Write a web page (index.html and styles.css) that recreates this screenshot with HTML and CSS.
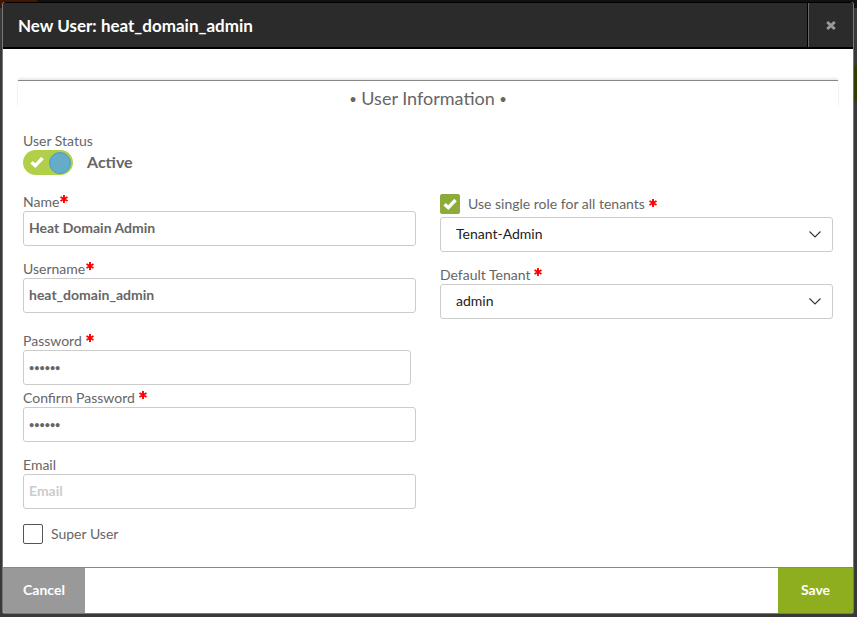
FILE: index.html
```html
<!DOCTYPE html>
<html lang="en">
<head>
<meta charset="utf-8">
<title>New User</title>
<link rel="stylesheet" href="styles.css">
</head>
<body>
<svg class="defs" aria-hidden="true">
  <symbol id="star" viewBox="0 0 8 8"><path d="M4 0v8M.5 2l7 4M7.5 2l-7 4" stroke="#f00" stroke-width="1.9"/></symbol>
  <symbol id="chevron" viewBox="0 0 12 7"><path d="M.5.5 6 6 11.500.5" fill="none" stroke="#333" stroke-width="1.1"/></symbol>
  <symbol id="check" viewBox="0 0 14 12"><path d="M1.500 6.200 5.300 9.600 12.500 2" fill="none" stroke="#fff" stroke-width="3.400"/></symbol>
</svg>
<div class="backdrop-accent backdrop-brand"></div>
<div class="backdrop-accent backdrop-action"></div>
<form class="dialog" role="dialog" aria-labelledby="title">
  <header class="dialog-header">
    <h1 class="dialog-title" id="title">New User: heat_domain_admin</h1>
    <button class="close" type="button" aria-label="Close">
      <svg width="10" height="9" viewBox="0 0 10 9"><path d="M1.200 1 8.800 8M8.800 1 1.200 8" stroke="#98989d" stroke-width="2.900"/></svg>
    </button>
  </header>
  <main class="dialog-body">
    <h2 class="section-title"><span class="bullet">•</span> User Information <span class="bullet">•</span></h2>
    <div class="columns">
      <div class="column">
        <div class="status">
          <label class="label" for="status">User Status</label>
          <div class="status-row">
            <span class="toggle">
              <input class="toggle-input" type="checkbox" id="status" checked>
              <svg class="toggle-check" width="14" height="12"><use href="#check"/></svg>
            </span>
            <span class="status-value">Active</span>
          </div>
        </div>
        <div class="field">
          <label class="label" for="name">Name<svg class="star star-tight"><use href="#star"/></svg></label>
          <input class="control" id="name" type="text" value="Heat Domain Admin">
        </div>
        <div class="field field-spaced">
          <label class="label" for="username">Username<svg class="star star-tight"><use href="#star"/></svg></label>
          <input class="control" id="username" type="text" value="heat_domain_admin">
        </div>
        <div class="field field-close field-password">
          <label class="label" for="password">Password<svg class="star"><use href="#star"/></svg></label>
          <input class="control control-secret" id="password" type="password" value="secret">
        </div>
        <div class="field">
          <label class="label" for="confirm">Confirm Password<svg class="star"><use href="#star"/></svg></label>
          <input class="control control-secret" id="confirm" type="password" value="secret">
        </div>
        <div class="field">
          <label class="label" for="email">Email</label>
          <input class="control" id="email" type="email" placeholder="Email">
        </div>
        <div class="check-row">
          <span class="checkbox"><input class="checkbox-input" type="checkbox" id="super"></span>
          <label class="check-label" for="super">Super User</label>
        </div>
      </div>
      <div class="column column-roles">
        <div class="field">
          <div class="check-row check-row-top">
            <span class="checkbox"><input class="checkbox-input" type="checkbox" id="single" checked><svg class="checkbox-mark" width="14" height="12"><use href="#check"/></svg></span>
            <label class="check-label" for="single">Use single role for all tenants<svg class="star star-inline"><use href="#star"/></svg></label>
          </div>
          <div class="select-wrap">
            <select class="control select" aria-label="Role"><option>Tenant-Admin</option></select>
            <svg class="chevron" width="12" height="7"><use href="#chevron"/></svg>
          </div>
        </div>
        <div class="field">
          <label class="label" for="tenant">Default Tenant<svg class="star"><use href="#star"/></svg></label>
          <div class="select-wrap">
            <select class="control select" id="tenant"><option>admin</option></select>
            <svg class="chevron" width="12" height="7"><use href="#chevron"/></svg>
          </div>
        </div>
      </div>
    </div>
  </main>
  <footer class="dialog-footer">
    <button class="button button-cancel" type="button">Cancel</button>
    <button class="button button-save" type="submit">Save</button>
  </footer>
</form>
</body>
</html>
```
FILE: styles.css
```css
*, *::before, *::after { box-sizing: border-box; }

body {
  margin: 0;
  padding: 2px 3px 3px 2px;
  min-height: 100vh;
  display: flex;
  background: linear-gradient(#111 8px, #39393a 8px);
  color: #666;
  font: 14px/17px Lato, "Liberation Sans", sans-serif;
}

.defs { position: absolute; width: 0; height: 0; }

.backdrop-accent { position: absolute; z-index: -1; }
.backdrop-brand { top: 0; left: 0; width: 37px; height: 8px; background: #421603; }
.backdrop-action { top: 66px; right: 0; width: 8px; height: 35px; background: #2f3d00; }

.dialog {
  flex: 1;
  display: flex;
  flex-direction: column;
  background: #fff;
  border: 1px solid #777;
  border-top: 0;
  border-radius: 3px;
  overflow: hidden;
}

.dialog-header {
  display: flex;
  height: 47px;
  margin: 0 -1px;
  background: #2b2b2c;
  border: 1px solid #000;
  border-bottom-width: 2px;
  border-radius: 3px 3px 0 0;
}

.dialog-title {
  flex: 1;
  margin: 0;
  padding-left: 15px;
  color: #fff;
  font-size: 17px;
  font-weight: 700;
  line-height: 46px;
}

.close {
  width: 45px;
  padding: 0;
  display: flex;
  align-items: center;
  justify-content: center;
  background: none;
  border: 0;
  border-left: 1px solid #666;
  box-shadow: -1px 0 #000;
}

.dialog-body { flex: 1; padding: 31px 15px 20px; }

.section-title {
  margin: 0 0 26px;
  height: 27px;
  color: #666;
  font-size: 18px;
  font-weight: 400;
  line-height: 34px;
  text-align: center;
  border-top: 1px solid #888;
  box-shadow: 0 -1px 3px #ddd;
  clip-path: inset(-4px -1px 0);
}
.bullet { font-size: 13px; vertical-align: 1px; line-height: 1; }

.columns {
  display: grid;
  grid-template-columns: 1fr 1fr;
  gap: 24px;
  padding: 0 5px;
}

.column { display: flex; flex-direction: column; min-width: 0; }
.column-roles { padding-top: 61px; }

.label { display: block; height: 17px; line-height: 15px; }

.star { width: 8px; height: 8px; margin-left: 4px; vertical-align: 4px; }
.star-tight { margin-left: 1px; }
.star-inline { vertical-align: 2px; }

.status { margin-bottom: 19px; }
.status-row { display: flex; align-items: center; gap: 14px; height: 25px; }
.status-value { padding-bottom: 2px; font-size: 16px; font-weight: 700; }

.toggle { position: relative; width: 50px; height: 25px; }
.toggle-input {
  appearance: none;
  display: flex;
  align-items: center;
  justify-content: flex-end;
  width: 100%;
  height: 100%;
  margin: 0;
  padding: 0 2px;
  border-radius: 13px;
  background: #b1cf49;
}
.toggle-input::after {
  content: "";
  width: 22px;
  height: 22px;
  border: 1px solid #449fcf;
  border-radius: 50%;
  background: #66abc8;
}
.toggle-input:not(:checked) { justify-content: flex-start; background: #bbb; }
.toggle-check { position: absolute; left: 7px; top: 6px; pointer-events: none; }

.field { margin-bottom: 15px; }
.field-spaced { margin-bottom: 20px; }
.field-close { margin-bottom: 5px; }
.field-password { padding-right: 5px; }

.control {
  display: block;
  width: 100%;
  height: 35px;
  margin: 0;
  padding: 0 5px 2px;
  border: 1px solid #ccc;
  border-radius: 3px;
  background: #fff;
  color: #666;
  font: inherit;
  font-weight: 700;
}
.control::placeholder { color: #ccc; opacity: 1; }
.control-secret { padding-bottom: 0; font-size: 9px; }

.select-wrap { position: relative; }
.select { appearance: none; padding: 0 36px 2px 15px; color: #222; font-weight: 400; }
.chevron { position: absolute; right: 12px; top: 14px; pointer-events: none; }

.check-row { display: flex; align-items: center; gap: 8px; height: 20px; }
.check-row-top { margin-bottom: 3px; }
.check-label { padding-bottom: 2px; }

.checkbox { position: relative; width: 20px; height: 20px; }
.checkbox-input {
  appearance: none;
  display: block;
  width: 100%;
  height: 100%;
  margin: 0;
  border: 1px solid #555;
  border-radius: 2px;
  background: #fff;
}
.checkbox-input:checked { border-color: #8cab3b; background: #8cab3b; }
.checkbox-mark { position: absolute; left: 3px; top: 4px; pointer-events: none; }

.dialog-footer {
  display: flex;
  justify-content: space-between;
  height: 46px;
  border-top: 1px solid #888;
}
.button {
  padding: 0 0 2px;
  border: 0;
  color: #fff;
  font: inherit;
  font-weight: 700;
}
.button-cancel { width: 82px; background: #999; }
.button-save { width: 75px; background: #8eae20; }
```
